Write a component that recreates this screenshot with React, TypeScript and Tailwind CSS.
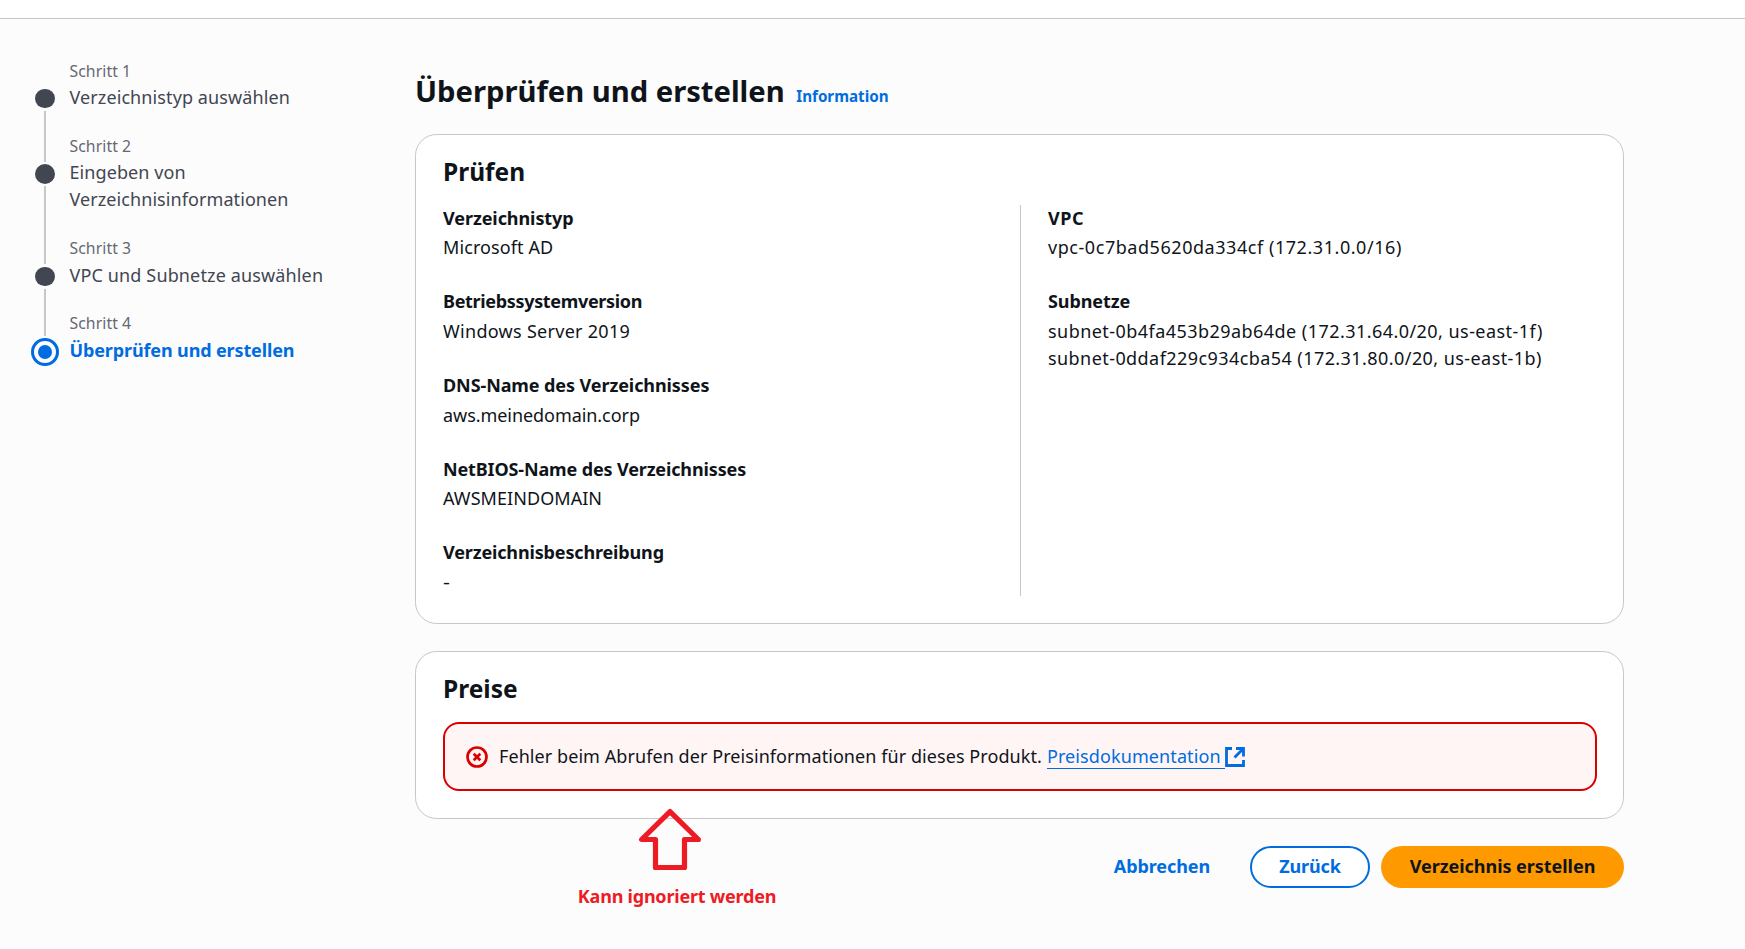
import type { ReactNode } from "react";

type StepProps = { label: string; children: ReactNode; active?: boolean };

function Step({ label, children, active = false }: StepProps) {
  return (
    <li className="pb-[23.9px]">
      <div className="mb-[2.2px] text-[15.75px] leading-[22.1px] tracking-[0.08px] text-[#656871]">{label}</div>
      <div
        className={
          active
            ? "text-[18px] leading-[27px] font-bold tracking-[-0.13px] text-[#006ce0]"
            : "text-[18px] leading-[27px] tracking-[0.1px] text-[#424650]"
        }
      >
        {children}
      </div>
    </li>
  );
}

const Dot = () => <span className="size-[19.5px] shrink-0 rounded-full bg-[#424650]" />;

function Field({ label, labelClass, children }: { label: string; labelClass: string; children: ReactNode }) {
  return (
    <div>
      <dt className={`mb-[2.6px] font-bold ${labelClass}`}>{label}</dt>
      <dd>{children}</dd>
    </div>
  );
}

function ErrorIcon() {
  return (
    <svg className="size-[22px] shrink-0" viewBox="0 0 22 22" fill="none" stroke="#db0000" strokeWidth="2.7">
      <circle cx="11" cy="11" r="9.5" />
      <path d="M7.700 7.700l6.600 6.600M14.300 7.700l-6.600 6.600" />
    </svg>
  );
}

function ExternalIcon() {
  return (
    <svg className="ml-[0.5px] size-[20px] shrink-0" viewBox="0 0 20 20" fill="none" stroke="#006ce0" strokeWidth="2.8">
      <path d="M7 1.500H1.500v17h17v-5.500" />
      <path d="M11 1.500h7.500V9.500M18.200 1.800L9.500 10.500" />
    </svg>
  );
}

export default function App() {
  return (
    <div className="flex h-[949px] w-full flex-col overflow-hidden bg-[#fcfcfd] font-['Noto_Sans',sans-serif] text-[18px] leading-[27px] text-[#0f141a]">
      <div className="h-[19px] shrink-0 border-b border-[#c6c6cd] bg-white" />

      <div className="flex">
        <nav className="flex w-[415px] shrink-0 pt-[40px] pl-[31px]">
          <div className="flex w-[28px] flex-col items-center pt-[29.7px]">
            <Dot />
            <span className="my-[2.5px] h-[51px] w-[2px] shrink-0 bg-[#c6c6cd]" />
            <Dot />
            <span className="my-[2.5px] h-[78.2px] w-[2px] shrink-0 bg-[#c6c6cd]" />
            <Dot />
            <span className="mt-[2.5px] mb-[2.5px] h-[46.8px] w-[2px] shrink-0 bg-[#c6c6cd]" />
            <span className="flex size-[27.5px] shrink-0 items-center justify-center rounded-full border-[3px] border-[#006ce0]">
              <span className="size-[14px] rounded-full bg-[#006ce0]" />
            </span>
          </div>
          <ol className="ml-[10.5px] w-[270px] pt-[0.9px]">
            <Step label="Schritt 1">Verzeichnistyp auswählen</Step>
            <Step label="Schritt 2">
              <span className="tracking-[0.08px]">Eingeben von Verzeichnisinformationen</span>
            </Step>
            <Step label="Schritt 3">
              <span className="tracking-[0.14px]">VPC und Subnetze auswählen</span>
            </Step>
            <Step label="Schritt 4" active>
              Überprüfen und erstellen
            </Step>
          </ol>
        </nav>

        <main className="flex w-[1209px] flex-col">
          <div className="flex items-baseline pt-[52px]">
            <h1 className="text-[29.2px] leading-[40px] font-bold">Überprüfen und erstellen</h1>
            <a className="ml-[11.5px] text-[15.2px] font-bold text-[#006ce0]">Information</a>
          </div>

          <section className="mt-[23px] h-[490px] rounded-[21.6px] border border-[#c6c6cd] bg-white px-[27px] pt-[20px]">
            <h2 className="text-[24.5px] leading-[33px] font-bold">Prüfen</h2>
            <div className="mt-[17px] flex h-[391px]">
              <dl className="-mt-[0.2px] flex w-[578px] flex-col gap-[27px] border-r border-[#c6c6cd]">
                <Field label="Verzeichnistyp" labelClass="tracking-[-0.08px]">
                  <span className="tracking-[0.1px]">Microsoft AD</span>
                </Field>
                <Field label="Betriebssystemversion" labelClass="tracking-[-0.33px]">
                  <span className="tracking-[0.29px]">Windows Server 2019</span>
                </Field>
                <Field label="DNS-Name des Verzeichnisses" labelClass="tracking-[-0.09px]">
                  <span className="tracking-[-0.06px]">aws.meinedomain.corp</span>
                </Field>
                <Field label="NetBIOS-Name des Verzeichnisses" labelClass="tracking-[-0.14px]">
                  <span className="tracking-[0.06px]">AWSMEINDOMAIN</span>
                </Field>
                <Field label="Verzeichnisbeschreibung" labelClass="tracking-[-0.15px]">
                  <span className="inline-block origin-left scale-x-120">-</span>
                </Field>
              </dl>
              <dl className="-mt-[0.2px] flex flex-col gap-[27px] pl-[27px]">
                <Field label="VPC" labelClass="tracking-[0.5px]">
                  <span className="tracking-[0.55px]">vpc-0c7bad5620da334cf (172.31.0.0/16)</span>
                </Field>
                <Field label="Subnetze" labelClass="tracking-[-0.08px]">
                  <div className="tracking-[0.45px]">subnet-0b4fa453b29ab64de (172.31.64.0/20, us-east-1f)</div>
                  <div className="tracking-[0.43px]">subnet-0ddaf229c934cba54 (172.31.80.0/20, us-east-1b)</div>
                </Field>
              </dl>
            </div>
          </section>

          <section className="relative mt-[27px] h-[168px] rounded-[21.6px] border border-[#c6c6cd] bg-white pt-[20px] pr-[26px] pl-[27px]">
            <h2 className="text-[24.5px] leading-[33px] font-bold">Preise</h2>
            <div className="mt-[17px] flex h-[69px] items-center rounded-[16px] border-2 border-[#db0000] bg-[#fff5f5] pl-[21px]">
              <ErrorIcon />
              <p className="ml-[11px] tracking-[0.07px]">Fehler beim Abrufen der Preisinformationen für dieses Produkt.</p>
              <a className="ml-[5px] flex items-center text-[#006ce0]">
                <span className="-mt-px h-[26px] border-b border-[#006ce0] pr-[4px] tracking-[0.1px]">Preisdokumentation</span>
                <ExternalIcon />
              </a>
            </div>
            <div className="absolute top-[156px] left-[161px] flex w-[200px] flex-col items-center text-[#ed1c24]">
              <svg className="mr-[14px] h-[64px] w-[64px]" viewBox="0 0 64 64" fill="none" stroke="currentColor" strokeWidth="5.2" strokeLinejoin="round">
                <path d="M32 3.600L3.600 31.500H17.500V59.500H46.500V31.500H60.400Z" />
              </svg>
              <span className="mt-[11px] leading-[27px] font-bold tracking-[-0.22px] whitespace-nowrap">Kann ignoriert werden</span>
            </div>
          </section>

          <div className="mt-[27px] flex h-[42px] justify-end gap-[11px] font-bold">
            <button className="mr-[29px] pb-[2px] tracking-[-0.1px] text-[#006ce0]">Abbrechen</button>
            <button className="w-[120px] rounded-full border-2 border-[#006ce0] bg-white pb-[2px] tracking-[-0.15px] text-[#006ce0]">Zurück</button>
            <button className="w-[243px] rounded-full bg-[#ff9900] pb-[2px] tracking-[-0.04px]">Verzeichnis erstellen</button>
          </div>
        </main>
      </div>
    </div>
  );
}
